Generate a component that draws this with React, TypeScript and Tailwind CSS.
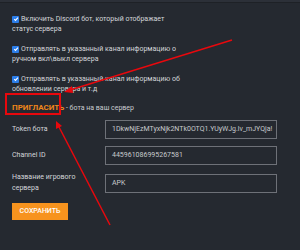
const checks = [
  'Включить Discord бот, который отображает статус сервера',
  'Отправлять в указанный канал информацию о ручном вкл\\выкл сервера',
  'Отправлять в указанный канал информацию об обновлении сервера и т.д',
];

const fields = [
  { label: 'Token бота', value: '1DkwNjEzMTyxNjk2NTk0OTQ1.YUyWJg.lv_mJYQja!' },
  { label: 'Channel ID', value: '445961086995267581' },
  { label: 'Название игрового сервера', value: 'APK' },
];

function Check() {
  return (
    <span className="inline-flex items-center justify-center w-[7px] h-[7px] mr-[2px] align-[-1px] rounded-[1px] bg-[#2b7de9]">
      <svg width="6" height="6" viewBox="0 0 10 10">
        <path d="M2 5.2 L4.2 7.4 L8.2 2.6" stroke="#fff" strokeWidth="1.8" fill="none" />
      </svg>
    </span>
  );
}

export default function App() {
  return (
    <div
      className="relative w-[300px] h-[250px] overflow-hidden bg-[#252930] text-[#d4d6da]"
      style={{ fontFamily: 'Roboto, "Liberation Sans", sans-serif' }}
    >
      <div className="h-[3px] bg-[#2c3038] border-b border-[#1e2126]" />

      <div className="pl-[12px] pt-[11px]">
        <div className="flex flex-col gap-[10px] w-[172px] text-[7px] leading-[10px]">
          {checks.map((t) => (
            <p key={t}>
              <Check />
              {t}
            </p>
          ))}
        </div>

        <p className="mt-[9px] text-[7px] leading-[10px] text-[#c9cbcf]">
          <span className="font-bold text-[8px] text-[#f0861a]">ПРИГЛАСИТЬ</span> - бота на ваш сервер
        </p>

        <div className="mt-[7px] flex flex-col gap-[7px]">
          {fields.map((f) => (
            <div key={f.label} className="flex items-center">
              <div className="w-[93px] text-[7px] leading-[11px] pr-[20px]">{f.label}</div>
              <div className="w-[172px] h-[19px] flex items-center border border-[#6e7178] px-[6px] text-[7px] text-[#c7c9cd] whitespace-nowrap overflow-hidden">
                {f.value}
              </div>
            </div>
          ))}
        </div>

        <button className="mt-[9px] w-[56px] h-[17px] bg-[#f7931e] text-white text-[7px] font-medium">
          СОХРАНИТЬ
        </button>
      </div>

      <svg className="absolute inset-0 pointer-events-none" width="300" height="250">
        <rect x="6" y="94" width="54" height="20" fill="none" stroke="#e8080d" strokeWidth="2" />
        <line x1="232" y1="40" x2="70" y2="90" stroke="#e8080d" strokeWidth="1.5" />
        <path d="M64 92 L72 86 L73 93 Z" fill="#e8080d" />
        <line x1="110" y1="225" x2="59" y2="127" stroke="#e8080d" strokeWidth="1.5" />
        <path d="M56 121 L62 126 L56 129 Z" fill="#e8080d" />
      </svg>
    </div>
  );
}
